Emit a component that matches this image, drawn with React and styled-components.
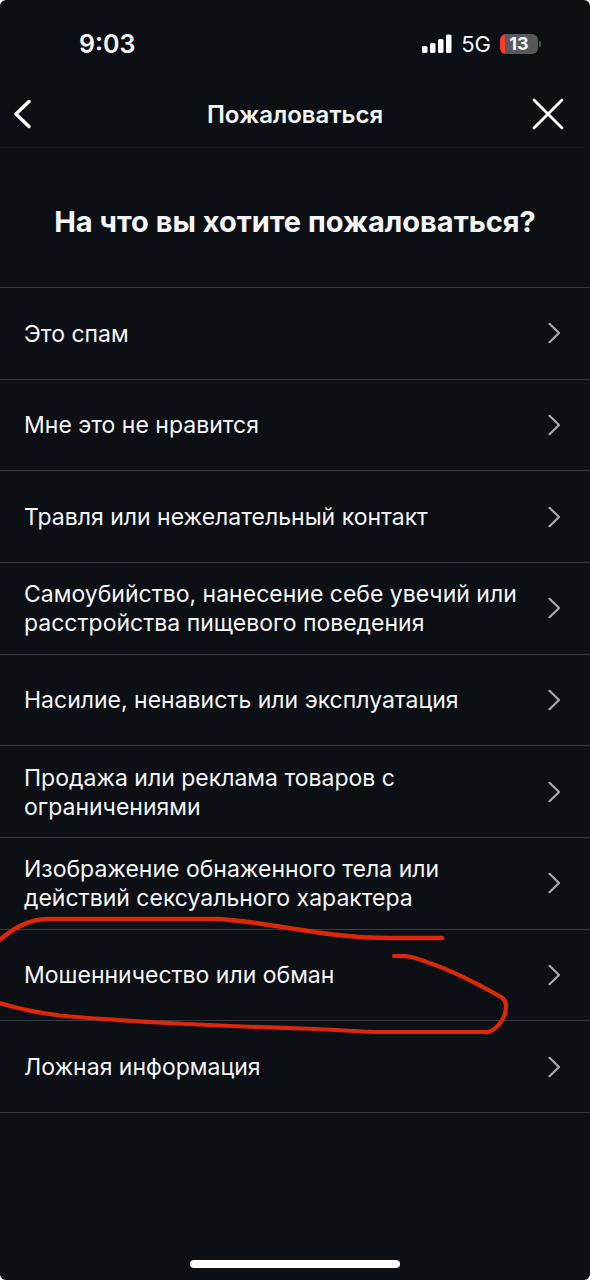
import React from "react";
import styled, { createGlobalStyle, css } from "styled-components";

const GlobalStyle = createGlobalStyle`
  * {
    box-sizing: border-box;
  }
  body {
    margin: 0;
    background-color: #ffffff;
    font-family: Inter, "Liberation Sans", sans-serif;
    color: #f5f6f8;
  }
`;

const Screen = styled.div`
  min-height: 100vh;
  display: flex;
  flex-direction: column;
  background-color: #0c1014;
  border-radius: 6px;
  overflow: hidden;
`;

const StatusBar = styled.div`
  height: 80px;
  padding: 8px 52px 0px 79px;
  display: flex;
  align-items: center;
  justify-content: space-between;
`;

const Time = styled.time`
  font-size: 25px;
  font-weight: 600;
`;

const Indicators = styled.div`
  display: flex;
  align-items: center;
  gap: 9px;
`;

const Network = styled.span`
  font-size: 22px;
  line-height: 24px;
`;

const Battery = styled.span`
  position: relative;
  width: 38px;
  height: 20px;
  border-radius: 6px;
  background: linear-gradient(to right, #ff3b30 5px, #58595d 5px);
  font-size: 18px;
  line-height: 20px;
  font-weight: 700;
  text-align: center;

  &::after {
    content: "";
    position: absolute;
    top: 7px;
    right: -3px;
    width: 2px;
    height: 6px;
    border-radius: 0 2px 2px 0;
    background-color: #58595d;
  }
`;

const Header = styled.header`
  height: 68px;
  padding: 0px 24px 0px 12px;
  display: grid;
  grid-template-columns: 36px 1fr 36px;
  align-items: center;
  border-bottom: 1px solid #171b20;
`;

const IconButton = styled.button`
  all: unset;
  height: 36px;
  display: flex;
  align-items: center;
  justify-content: ${(props) => props.$align};
  cursor: pointer;
`;

const HeaderTitle = styled.h1`
  margin: 0;
  padding: 2px 0px 0px 12px;
  font-size: 24px;
  line-height: 28px;
  font-weight: 600;
  text-align: center;
`;

const Question = styled.h2`
  margin: 0;
  padding: 56px 20px 47px;
  font-size: 29px;
  line-height: 36px;
  font-weight: 700;
  text-align: center;
`;

const List = styled.ul`
  min-height: 826px;
  margin: 0;
  padding: 0;
  display: grid;
  grid-auto-rows: 1fr;
  list-style: none;
  border-bottom: 1px solid #393c40;
`;

const Item = styled.li`
  display: flex;
  border-top: 1px solid #393c40;
  ${(props) =>
    props.$marked &&
    css`
      position: relative;
    `}
`;

const Reason = styled.button`
  all: unset;
  flex: 1;
  padding: 2px 28px 0px 24px;
  display: flex;
  align-items: center;
  justify-content: space-between;
  gap: 20px;
  font-size: 23px;
  line-height: 29px;
  cursor: pointer;

  svg {
    flex-shrink: 0;
  }
`;

// hand-drawn stroke, lies over the neighbouring rows
const Scribble = styled.svg`
  position: absolute;
  top: -21px;
  left: 0;
  pointer-events: none;
`;

const Footer = styled.footer`
  margin-top: auto;
  padding-bottom: 12px;
  display: flex;
  justify-content: center;
`;

const HomeIndicator = styled.div`
  width: 210px;
  height: 8px;
  border-radius: 4px;
  background-color: #ffffff;
`;

const Signal = () => (
  <svg width="30" height="20" viewBox="0 0 30 20" fill="#fff" aria-hidden="true">
    <rect x="0" y="12" width="5.5" height="7" rx="1.6" />
    <rect x="8" y="9" width="5.5" height="10" rx="1.6" />
    <rect x="16" y="5" width="5.5" height="14" rx="1.6" />
    <rect x="24" y="0.5" width="5.5" height="18.5" rx="1.6" />
  </svg>
);

const Back = () => (
  <svg width="20" height="32" viewBox="0 0 20 32" fill="none" aria-hidden="true">
    <path
      d="M17 3.5 4 16l13 12.5"
      stroke="#fff"
      strokeWidth="3.4"
      strokeLinecap="round"
      strokeLinejoin="round"
    />
  </svg>
);

const Close = () => (
  <svg width="36" height="36" viewBox="0 0 36 36" fill="none" aria-hidden="true">
    <path
      d="M4 4l28 28M32 4 4 32"
      stroke="#fff"
      strokeWidth="2.8"
      strokeLinecap="round"
    />
  </svg>
);

const Chevron = () => (
  <svg width="16" height="24" viewBox="0 0 16 24" fill="none" aria-hidden="true">
    <path
      d="M3.5 1.8 13 11l-9.5 9.2"
      stroke="#a5aab2"
      strokeWidth="2.2"
      strokeLinecap="round"
      strokeLinejoin="round"
    />
  </svg>
);

const Mark = () => (
  <Scribble width="520" height="130" viewBox="0 0 520 130" fill="none" aria-hidden="true">
    <path
      d="M-4 34C10 22 26 10 48 10H215C262 11 320 29 390 29H442"
      stroke="#dc270b"
      strokeWidth="4.4"
      strokeLinecap="round"
    />
    <path
      d="M394 47C410 46 418 50 428 53.5C454 62 478 75 501 88C505 90 506 93 506 98C506 108 499 118 490 122.5C488 123.5 486 123 484 123H375C350 122 330 120.5 300 119.5C220 117 130 113 60 106.5C40 104 15 99 -4 93"
      stroke="#dc270b"
      strokeWidth="4.2"
      strokeLinecap="round"
    />
  </Scribble>
);

const reasons = [
  { text: "Это спам" },
  { text: "Мне это не нравится" },
  { text: "Травля или нежелательный контакт" },
  { text: "Самоубийство, нанесение себе увечий или расстройства пищевого поведения" },
  { text: "Насилие, ненависть или эксплуатация" },
  { text: "Продажа или реклама товаров с ограничениями" },
  { text: "Изображение обнаженного тела или действий сексуального характера" },
  { text: "Мошенничество или обман", marked: true },
  { text: "Ложная информация" },
];

const App = () => (
  <>
    <GlobalStyle />
    <Screen>
      <StatusBar>
        <Time>9:03</Time>
        <Indicators>
          <Signal />
          <Network>5G</Network>
          <Battery>13</Battery>
        </Indicators>
      </StatusBar>
      <Header>
        <IconButton type="button" aria-label="Назад" $align="flex-start">
          <Back />
        </IconButton>
        <HeaderTitle>Пожаловаться</HeaderTitle>
        <IconButton type="button" aria-label="Закрыть" $align="flex-end">
          <Close />
        </IconButton>
      </Header>
      <main>
        <Question>На что вы хотите пожаловаться?</Question>
        <List>
          {reasons.map((reason) => (
            <Item key={reason.text} $marked={reason.marked}>
              <Reason type="button">
                {reason.text}
                <Chevron />
              </Reason>
              {reason.marked && <Mark />}
            </Item>
          ))}
        </List>
      </main>
      <Footer>
        <HomeIndicator />
      </Footer>
    </Screen>
  </>
);

export default App;
